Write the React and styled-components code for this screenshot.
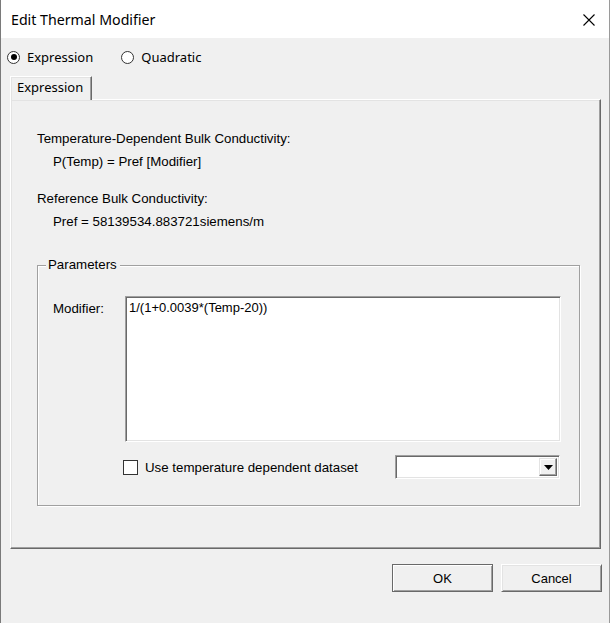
import React, { useState } from 'react';
import styled, { createGlobalStyle } from 'styled-components';

const GlobalStyle = createGlobalStyle`
  html, body {
    margin: 0;
    padding: 0;
    background: #f0f0f0;
  }
`;

const App = () => {
  const [mode, setMode] = useState('expression');
  const [modifier, setModifier] = useState('1/(1+0.0039*(Temp-20))');
  const [useDataset, setUseDataset] = useState(false);

  return (
    <>
      <GlobalStyle />
      <Window>
        <TitleBar>
          <Title>Edit Thermal Modifier</Title>
          <CloseButton aria-label="Close">
            <svg width="12" height="12" viewBox="0 0 12 12">
              <path d="M0.5 0.5 L11.5 11.5 M11.5 0.5 L0.5 11.5" stroke="#000" strokeWidth="1.1" fill="none" />
            </svg>
          </CloseButton>
        </TitleBar>
        <Body>
          <RadioRow>
            <RadioLabel onClick={() => setMode('expression')}>
              <Radio checked={mode === 'expression'} />
              Expression
            </RadioLabel>
            <RadioLabel onClick={() => setMode('quadratic')}>
              <Radio checked={mode === 'quadratic'} />
              Quadratic
            </RadioLabel>
          </RadioRow>

          <TabStrip>
            <Tab>Expression</Tab>
          </TabStrip>
          <TabPanel>
            <Heading>Temperature-Dependent Bulk Conductivity:</Heading>
            <Formula>P(Temp) = Pref [Modifier]</Formula>
            <Heading spaced>Reference Bulk Conductivity:</Heading>
            <Formula>Pref = 58139534.883721siemens/m</Formula>

            <GroupBox>
              <Legend>Parameters</Legend>
              <ModifierRow>
                <FieldLabel>Modifier:</FieldLabel>
                <TextArea value={modifier} onChange={e => setModifier(e.target.value)} spellCheck={false} />
              </ModifierRow>
              <OptionsRow>
                <CheckLabel onClick={() => setUseDataset(!useDataset)}>
                  <CheckBox>{useDataset ? '✓' : ''}</CheckBox>
                  Use temperature dependent dataset
                </CheckLabel>
                <Combo>
                  <ComboValue />
                  <ComboButton>
                    <svg width="9" height="5" viewBox="0 0 9 5">
                      <path d="M0 0 H9 L4.5 5 Z" fill="#000" />
                    </svg>
                  </ComboButton>
                </Combo>
              </OptionsRow>
            </GroupBox>
          </TabPanel>

          <ButtonRow>
            <Button isDefault>OK</Button>
            <Button>Cancel</Button>
          </ButtonRow>
        </Body>
      </Window>
    </>
  );
};

const Window = styled.div`
  width: 608px;
  height: 623px;
  border-left: 1px solid #7a7a7a;
  border-right: 1px solid #9a9a9a;
  background: #f0f0f0;
  display: flex;
  flex-direction: column;
  overflow: hidden;
`;

const TitleBar = styled.div`
  height: 38px;
  flex: 0 0 auto;
  background: #fff;
  display: flex;
  align-items: center;
  justify-content: space-between;
  padding: 0 14px 0 10px;
`;

const Title = styled.div`
  font-family: 'Noto Sans', 'Open Sans', sans-serif;
  font-size: 14.2px;
  color: #000;
  margin-top: 1px;
`;

const CloseButton = styled.div`
  width: 12px;
  height: 12px;
  display: flex;
  margin-top: 1px;
`;

const Body = styled.div`
  flex: 1;
  display: flex;
  flex-direction: column;
  padding: 10px 0 0 9px;
  font-family: 'Liberation Sans', Arial, sans-serif;
  font-size: 13.3px;
  color: #000;
`;

const RadioRow = styled.div`
  height: 18px;
  display: flex;
  align-items: center;
  gap: 28px;
  margin-left: -3px;
`;

const RadioLabel = styled.label`
  display: flex;
  align-items: center;
  gap: 7px;
  font-family: 'Noto Sans', 'Open Sans', sans-serif;
  font-size: 13px;
  cursor: default;
`;

const Radio = styled.span`
  width: 11px;
  height: 11px;
  border-radius: 50%;
  border: 1px solid #333;
  background: #fff;
  position: relative;
  box-sizing: content-box;

  &::after {
    content: '';
    display: ${p => (p.checked ? 'block' : 'none')};
    position: absolute;
    left: 2.5px;
    top: 2.5px;
    width: 6px;
    height: 6px;
    border-radius: 50%;
    background: #000;
  }
`;

const TabStrip = styled.div`
  display: flex;
  margin-top: 10px;
  height: 23px;
`;

const Tab = styled.div`
  width: 82px;
  height: 24px;
  box-sizing: border-box;
  border-top: 1px solid #fff;
  border-left: 1px solid #fff;
  border-right: 1px solid #696969;
  box-shadow: inset -1px 0 0 #a0a0a0, inset 1px 1px 0 #e3e3e3;
  display: flex;
  align-items: center;
  padding: 0 0 3px 6px;
  font-family: 'Noto Sans', 'Open Sans', sans-serif;
  font-size: 13px;
  margin-bottom: -1px;
  background: #f0f0f0;
  position: relative;
  z-index: 1;
`;

const TabPanel = styled.div`
  width: 591px;
  height: 450px;
  box-sizing: border-box;
  border-top: 1px solid #fff;
  border-left: 1px solid #fff;
  border-right: 1px solid #696969;
  border-bottom: 1px solid #696969;
  box-shadow: inset -1px -1px 0 #a0a0a0, inset 1px 1px 0 #e3e3e3;
  padding: 31px 0 0 26px;
  display: flex;
  flex-direction: column;
`;

const Heading = styled.div`
  height: 16px;
  line-height: 16px;
  margin-top: ${p => (p.spaced ? '21px' : '0')};
`;

const Formula = styled.div`
  height: 16px;
  line-height: 16px;
  margin-top: 7px;
  padding-left: 16px;
`;

const GroupBox = styled.div`
  position: relative;
  width: 543px;
  height: 241px;
  box-sizing: border-box;
  margin-top: 35px;
  border: 1px solid #a0a0a0;
  box-shadow: inset 1px 1px 0 #fff, 1px 1px 0 #fff;
  padding: 30px 0 0 15px;
`;

const Legend = styled.div`
  position: absolute;
  top: -9px;
  left: 8px;
  padding: 0 3px 0 2px;
  background: #f0f0f0;
  line-height: 16px;
`;

const ModifierRow = styled.div`
  display: flex;
`;

const FieldLabel = styled.div`
  width: 72px;
  padding-top: 5px;
  line-height: 16px;
`;

const TextArea = styled.textarea`
  width: 436px;
  height: 146px;
  box-sizing: border-box;
  margin: 0;
  resize: none;
  outline: none;
  border-top: 1px solid #a0a0a0;
  border-left: 1px solid #a0a0a0;
  border-right: 1px solid #fff;
  border-bottom: 1px solid #fff;
  box-shadow: inset 1px 1px 0 #696969, inset -1px -1px 0 #e3e3e3;
  background: #fff;
  padding: 3px 3px;
  font-family: 'Liberation Sans', Arial, sans-serif;
  font-size: 13px;
  line-height: 16px;
  color: #000;
`;

const OptionsRow = styled.div`
  display: flex;
  align-items: center;
  margin-top: 13px;
  padding-left: 70px;
`;

const CheckLabel = styled.label`
  display: flex;
  align-items: center;
  gap: 7px;
  width: 272px;
  cursor: default;
`;

const CheckBox = styled.span`
  width: 13px;
  height: 13px;
  border: 1px solid #333;
  background: #fff;
  font-size: 11px;
  line-height: 13px;
  text-align: center;
`;

const Combo = styled.div`
  width: 165px;
  height: 24px;
  box-sizing: border-box;
  display: flex;
  align-items: stretch;
  border-top: 1px solid #a0a0a0;
  border-left: 1px solid #a0a0a0;
  border-right: 1px solid #fff;
  border-bottom: 1px solid #fff;
  box-shadow: inset 1px 1px 0 #696969, inset -1px -1px 0 #e3e3e3;
  background: #fff;
  padding: 2px;
`;

const ComboValue = styled.div`
  flex: 1;
`;

const ComboButton = styled.div`
  width: 18px;
  box-sizing: border-box;
  background: #f0f0f0;
  border-top: 1px solid #e3e3e3;
  border-left: 1px solid #e3e3e3;
  border-right: 1px solid #696969;
  border-bottom: 1px solid #696969;
  box-shadow: inset -1px -1px 0 #a0a0a0, inset 1px 1px 0 #fff;
  display: flex;
  align-items: center;
  justify-content: center;
`;

const ButtonRow = styled.div`
  display: flex;
  justify-content: flex-end;
  gap: 8px;
  margin-top: 15px;
  padding-right: 7px;
`;

const Button = styled.div`
  width: 101px;
  height: 28px;
  box-sizing: border-box;
  display: flex;
  align-items: center;
  justify-content: center;
  background: #f0f0f0;
  border: 1px solid ${p => (p.isDefault ? '#696969' : '#fff')};
  border-right-color: #696969;
  border-bottom-color: #696969;
  box-shadow: ${p =>
    p.isDefault
      ? 'inset 1px 1px 0 #fff, inset -1px -1px 0 #a0a0a0'
      : 'inset 1px 1px 0 #e3e3e3, inset -1px -1px 0 #a0a0a0'};
  font-family: 'Liberation Sans', Arial, sans-serif;
  font-size: 13px;
  cursor: default;
`;

export default App;
